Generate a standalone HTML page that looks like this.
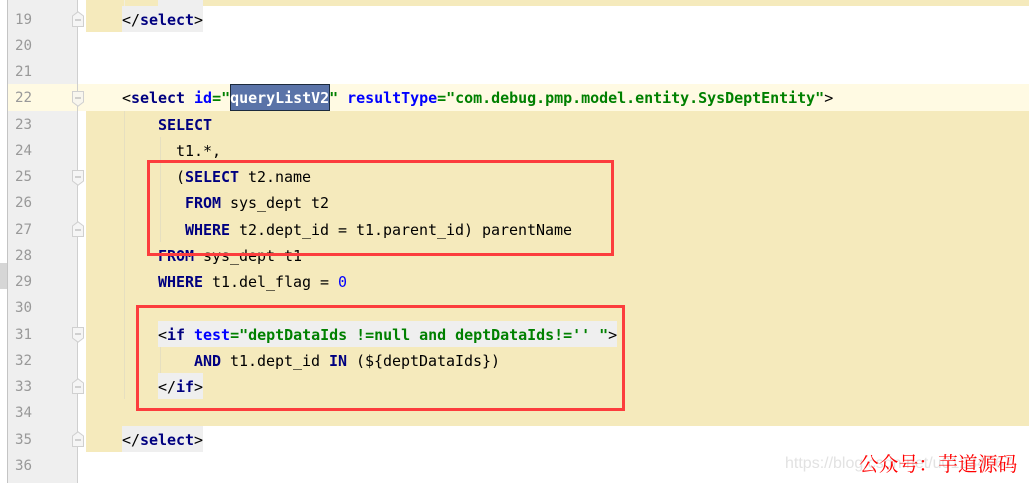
<!DOCTYPE html>
<html><head><meta charset="utf-8">
<style>
html,body{margin:0;padding:0;background:#fff}
#p{position:relative;width:1029px;height:483px;overflow:hidden;background:#fff;font-family:"DejaVu Sans Mono","Liberation Mono",monospace;font-size:15px;color:#000}
.a{position:absolute}
.y{position:absolute;background:#f5eabc}
.g{position:absolute;background:#efefef}
.n{position:absolute;left:15px;color:#999;font-size:14.2px;line-height:26px;height:26px}
.l{position:absolute;white-space:pre;line-height:26px;height:26px;letter-spacing:-.03px}
b{color:#000080;font-weight:bold}
i{font-style:normal;color:#0000ff;font-weight:bold}
u{text-decoration:none;color:#008000;font-weight:bold}
s{text-decoration:none;color:#0000ff}
svg{position:absolute;left:72px}
</style></head><body><div id="p">
<div class="a" style="left:7px;top:0;width:1px;height:483px;background:#c4c4c4"></div>
<div class="a" style="left:8px;top:0;width:69px;height:483px;background:#efefef"></div>
<div class="a" style="left:0;top:263px;width:7px;height:26px;background:#d6d6d6"></div>
<div class="a" style="left:8px;top:84px;width:1021px;height:27px;background:#fffae3"></div>
<div class="a" style="left:77px;top:0;width:1px;height:483px;background:#cfcfcf"></div>

<div class="y" style="left:86px;top:0;width:943px;height:6px"></div>
<div class="g" style="left:158px;top:0;width:45px;height:6px"></div>
<div class="y" style="left:86px;top:6px;width:36px;height:26px"></div>
<div class="g" style="left:122px;top:6px;width:81px;height:26px"></div>
<div class="y" style="left:86px;top:111px;width:943px;height:315px"></div>
<div class="y" style="left:86px;top:426px;width:36px;height:26px"></div>
<div class="g" style="left:122px;top:426px;width:81px;height:26px"></div>
<div class="g" style="left:158px;top:321px;width:459px;height:26px"></div>
<div class="g" style="left:158px;top:373px;width:45px;height:26px"></div>
<div class="a" style="left:124px;top:0;width:1px;height:6px;background:#f3efdc"></div>
<div class="a" style="left:124px;top:111px;width:1px;height:288px;background:#e6dfc0"></div>
<div class="a" style="left:160px;top:137px;width:1px;height:105px;background:#e6dfc0"></div>
<div class="a" style="left:160px;top:347px;width:1px;height:26px;background:#e6dfc0"></div>
<div class="a" style="left:230px;top:84px;width:98px;height:25px;background:#5a73a8;border:1px solid #1c2a3c"></div>

<div class="n" style="top:7px">19</div>
<div class="n" style="top:33px">20</div>
<div class="n" style="top:59px">21</div>
<div class="n" style="top:85px">22</div>
<div class="n" style="top:112px">23</div>
<div class="n" style="top:138px">24</div>
<div class="n" style="top:164px">25</div>
<div class="n" style="top:190px">26</div>
<div class="n" style="top:217px">27</div>
<div class="n" style="top:243px">28</div>
<div class="n" style="top:269px">29</div>
<div class="n" style="top:295px">30</div>
<div class="n" style="top:322px">31</div>
<div class="n" style="top:348px">32</div>
<div class="n" style="top:374px">33</div>
<div class="n" style="top:400px">34</div>
<div class="n" style="top:427px">35</div>
<div class="n" style="top:453px">36</div>

<svg style="top:11px" width="12" height="16" viewBox="0 0 12 16"><path d="M.5 15.5V5L6 .8 11.500 5V15.500Z" fill="#f5f5f5" stroke="#d0d0d0"/><path d="M3 9H9" stroke="#aaa"/></svg>
<svg style="top:91px" width="12" height="16" viewBox="0 0 12 16"><path d="M.5 .5H11.500V11L6 15.200 .5 11Z" fill="#f8f6ee" stroke="#d0d0d0"/><path d="M3 7H9" stroke="#aaa"/></svg>
<svg style="top:170px" width="12" height="16" viewBox="0 0 12 16"><path d="M.5 .5H11.500V11L6 15.200 .5 11Z" fill="#f5f5f5" stroke="#d0d0d0"/><path d="M3 7H9" stroke="#aaa"/></svg>
<svg style="top:221px" width="12" height="16" viewBox="0 0 12 16"><path d="M.5 15.500V5L6 .8 11.500 5V15.500Z" fill="#f5f5f5" stroke="#d0d0d0"/><path d="M3 9H9" stroke="#aaa"/></svg>
<svg style="top:327px" width="12" height="16" viewBox="0 0 12 16"><path d="M.5 .5H11.500V11L6 15.200 .5 11Z" fill="#f5f5f5" stroke="#d0d0d0"/><path d="M3 7H9" stroke="#aaa"/></svg>
<svg style="top:378px" width="12" height="16" viewBox="0 0 12 16"><path d="M.5 15.500V5L6 .8 11.500 5V15.500Z" fill="#f5f5f5" stroke="#d0d0d0"/><path d="M3 9H9" stroke="#aaa"/></svg>
<svg style="top:431px" width="12" height="16" viewBox="0 0 12 16"><path d="M.5 15.500V5L6 .8 11.500 5V15.500Z" fill="#f5f5f5" stroke="#d0d0d0"/><path d="M3 9H9" stroke="#aaa"/></svg>

<div class="l" style="left:122px;top:7px">&lt;/<b>select</b>&gt;</div>
<div class="l" style="left:122px;top:85px">&lt;<b>select</b> <i>id</i><u>="</u><span style="color:#fff;font-weight:bold">queryListV2</span><u>"</u> <i>resultType</i><u>="com.debug.pmp.model.entity.SysDeptEntity"</u>&gt;</div>
<div class="l" style="left:158px;top:112px"><b>SELECT</b></div>
<div class="l" style="left:176px;top:138px">t1.*,</div>
<div class="l" style="left:176px;top:164px">(<b>SELECT</b> t2.name</div>
<div class="l" style="left:185px;top:190px"><b>FROM</b> sys_dept t2</div>
<div class="l" style="left:185px;top:217px"><b>WHERE</b> t2.dept_id = t1.parent_id) parentName</div>
<div class="l" style="left:158px;top:243px"><b>FROM</b> sys_dept t1</div>
<div class="l" style="left:158px;top:269px"><b>WHERE</b> t1.del_flag = <s>0</s></div>
<div class="l" style="left:158px;top:322px">&lt;<b>if</b> <i>test</i><u>="deptDataIds !=null and deptDataIds!='' "</u>&gt;</div>
<div class="l" style="left:194px;top:348px"><b>AND</b> t1.dept_id <b>IN</b> (${deptDataIds})</div>
<div class="l" style="left:158px;top:374px">&lt;/<b>if</b>&gt;</div>
<div class="l" style="left:122px;top:427px">&lt;/<b>select</b>&gt;</div>

<div class="a" style="left:147px;top:160px;width:461px;height:90px;border:3.500px solid #fc3d3d"></div>
<div class="a" style="left:136px;top:305px;width:483px;height:100px;border:3px solid #fc3d3d"></div>

<div class="a" style="left:785px;top:455px;font-family:'Liberation Sans',sans-serif;font-size:16px;line-height:18px;color:#e2e2e2;white-space:nowrap">https://blog.csdn.net/u01234567</div>
<div class="a" style="left:859px;top:452px;font-size:19.800px;line-height:22px;color:#ff0000;white-space:nowrap;font-family:'Noto Serif CJK SC',serif">公众号：芋道源码</div>
</div></body></html>
